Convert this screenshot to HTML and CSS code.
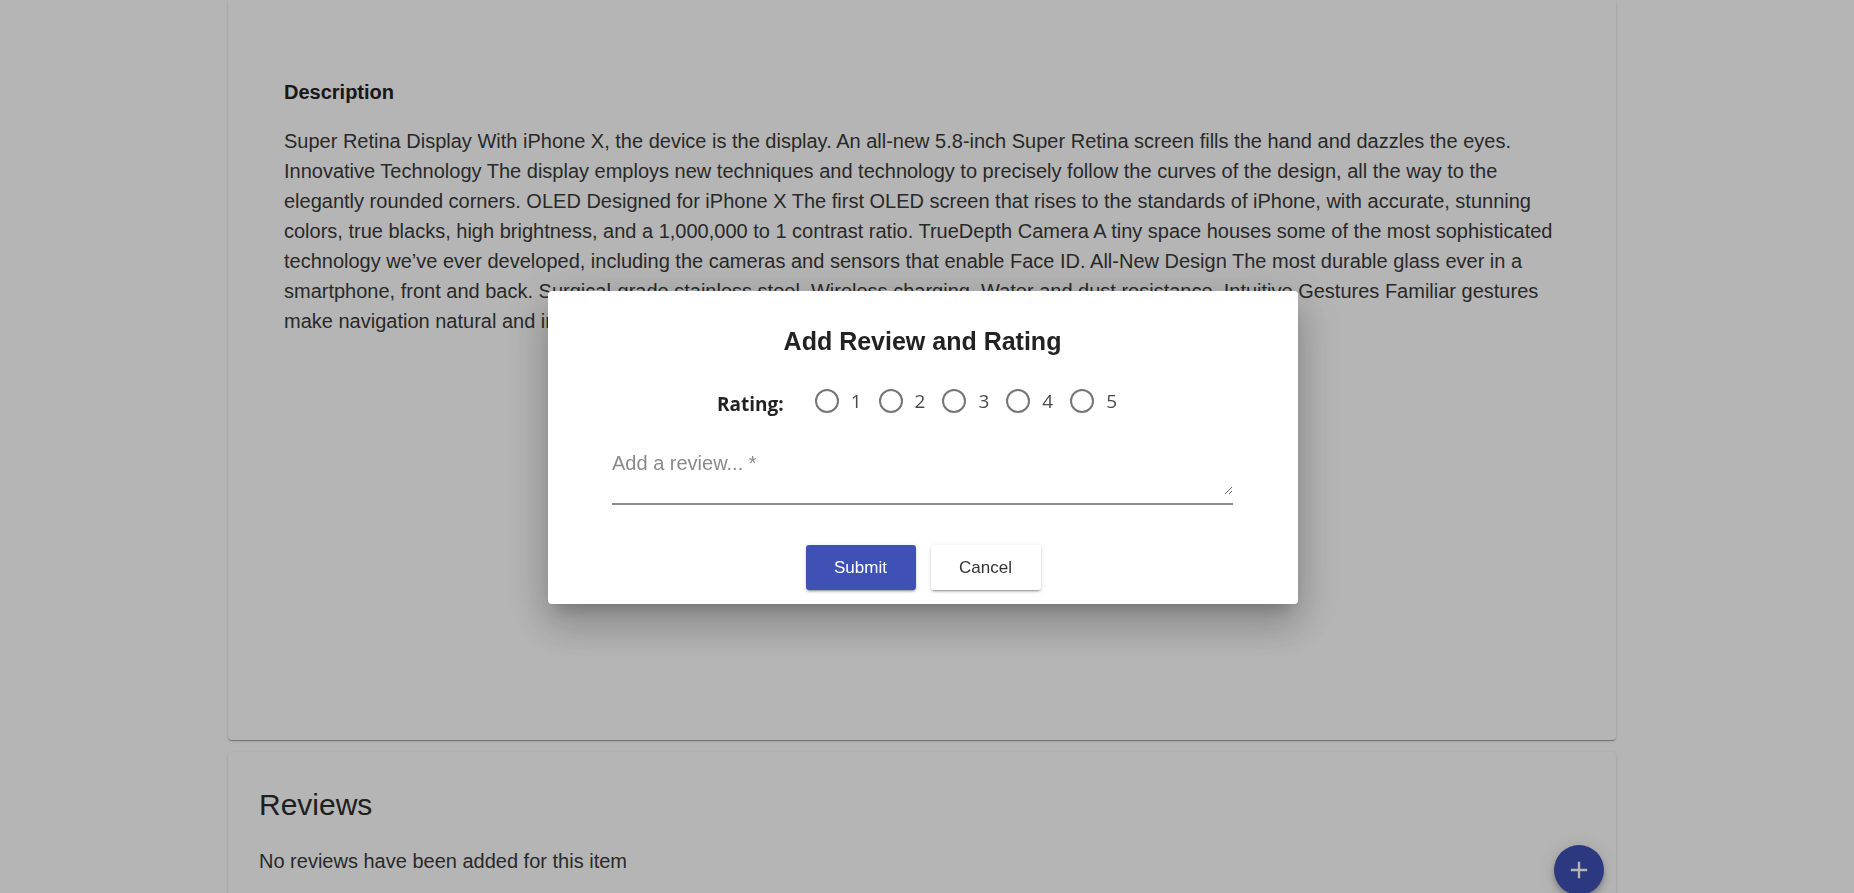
FILE: index.html
```html
<!DOCTYPE html>
<html lang="en">
<head>
<meta charset="utf-8">
<title>Product</title>
<link rel="stylesheet" href="styles.css">
</head>
<body>
<div class="page">
  <section class="card card-details">
    <h3 class="desc-title">Description</h3>
    <p class="desc-text">Super Retina Display With iPhone X, the device is the display. An all-new 5.8-inch Super Retina screen fills the hand and dazzles the eyes. Innovative Technology The display employs new techniques and technology to precisely follow the curves of the design, all the way to the elegantly rounded corners. OLED Designed for iPhone X The first OLED screen that rises to the standards of iPhone, with accurate, stunning colors, true blacks, high brightness, and a 1,000,000 to 1 contrast ratio. TrueDepth Camera A tiny space houses some of the most sophisticated technology we’ve ever developed, including the cameras and sensors that enable Face ID. All-New Design The most durable glass ever in a smartphone, front and back. Surgical-grade stainless steel. Wireless charging. Water and dust resistance. Intuitive Gestures Familiar gestures make navigation natural and intuitive. Instead of pressing a button, a single swipe takes you home.</p>
  </section>
  <section class="card card-reviews">
    <h2 class="reviews-title">Reviews</h2>
    <p class="reviews-empty">No reviews have been added for this item</p>
  </section>
</div>

<button class="fab" aria-label="Add review">
  <svg viewBox="0 0 24 24" width="28" height="28"><path d="M19 13h-6v6h-2v-6H5v-2h6V5h2v6h6v2z" fill="#fff"/></svg>
</button>

<div class="backdrop">
  <div class="dialog">
    <h2 class="dialog-title">Add Review and Rating</h2>
    <div class="rating-row">
      <span class="rating-label">Rating:</span>
      <div class="radio-group">
        <label class="radio"><span class="radio-circle"></span><span class="radio-num">1</span></label>
        <label class="radio"><span class="radio-circle"></span><span class="radio-num">2</span></label>
        <label class="radio"><span class="radio-circle"></span><span class="radio-num">3</span></label>
        <label class="radio"><span class="radio-circle"></span><span class="radio-num">4</span></label>
        <label class="radio"><span class="radio-circle"></span><span class="radio-num">5</span></label>
      </div>
    </div>
    <div class="field">
      <textarea class="review-input" placeholder="Add a review... *"></textarea>
    </div>
    <div class="actions">
      <button class="btn btn-primary">Submit</button>
      <button class="btn btn-plain">Cancel</button>
    </div>
  </div>
</div>
</body>
</html>
```
FILE: styles.css
```css
html, body {
  margin: 0;
  height: 893px;
  overflow: hidden;
}
body {
  background: #ffffff;
  font-family: "Liberation Sans", Arial, sans-serif;
  color: #383838;
}
.page {
  padding-left: 228px;
}
.card {
  box-sizing: border-box;
  width: 1388px;
  background: #ffffff;
  border-radius: 0 0 4px 4px;
  box-shadow: 0 2px 1px -1px rgba(0,0,0,0.2), 0 1px 1px 0 rgba(0,0,0,0.14), 0 1px 3px 0 rgba(0,0,0,0.12);
}
.card-details {
  height: 740px;
  padding: 81px 55px 0 56px;
}
.desc-title {
  margin: 0;
  font-size: 20px;
  line-height: 22px;
  font-weight: 700;
  color: #222222;
}
.desc-text {
  margin: 23px 0 0;
  font-size: 20px;
  line-height: 30px;
  color: #3a3a3a;
}
.card-reviews {
  margin-top: 12px;
  height: 300px;
  padding: 35px 31px 0;
  border-radius: 4px;
}
.reviews-title {
  margin: 0;
  font-size: 30px;
  line-height: 36px;
  font-weight: 400;
  color: #2c2c2c;
}
.reviews-empty {
  margin: 26px 0 0;
  font-size: 20px;
  line-height: 24px;
  color: #3a3a3a;
}
.fab {
  position: fixed;
  right: 250px;
  bottom: -2px;
  width: 50px;
  height: 50px;
  border: 0;
  border-radius: 50%;
  background: #3f51b5;
  display: flex;
  align-items: center;
  justify-content: center;
  padding: 0;
  box-shadow: 0 3px 5px -1px rgba(0,0,0,0.2), 0 6px 10px 0 rgba(0,0,0,0.14), 0 1px 18px 0 rgba(0,0,0,0.12);
}
.backdrop {
  position: fixed;
  inset: 0;
  background: rgba(0,0,0,0.29);
  display: flex;
  align-items: center;
  justify-content: center;
  padding: 2px 8px 0 0;
}
.dialog {
  box-sizing: border-box;
  width: 750px;
  height: 313px;
  background: #ffffff;
  border-radius: 4px;
  padding: 35px 65px 0 64px;
  box-shadow: 0 11px 15px -7px rgba(0,0,0,0.2), 0 24px 38px 3px rgba(0,0,0,0.14), 0 9px 46px 8px rgba(0,0,0,0.12);
}
.dialog-title {
  margin: 0;
  text-align: center;
  font-size: 25px;
  line-height: 30px;
  font-weight: 700;
  color: #222222;
}
.rating-row {
  margin-top: 24px;
  height: 42px;
  display: flex;
  align-items: center;
  padding-left: 105px;
}
.rating-label {
  font-family: "Open Sans", "Noto Sans", sans-serif;
  font-weight: 700;
  font-size: 19px;
  color: #222222;
  padding-top: 6px;
  margin-right: 31px;
}
.radio-group {
  display: flex;
  align-items: center;
}
.radio {
  display: flex;
  align-items: center;
  margin-right: 17px;
}
.radio-circle {
  box-sizing: border-box;
  width: 24px;
  height: 24px;
  border: 2.5px solid #757575;
  border-radius: 50%;
  margin-right: 12px;
}
.radio-num {
  font-family: "Open Sans", "Noto Sans", sans-serif;
  font-size: 19px;
  color: #4a4a4a;
}
.field {
  margin-top: 29px;
  padding-bottom: 8px;
  border-bottom: 2px solid #8d8d8d;
}
.review-input {
  display: block;
  box-sizing: border-box;
  width: 100%;
  height: 44px;
  margin: 0;
  padding: 0;
  border: 0;
  outline: none;
  resize: vertical;
  font-family: "Liberation Sans", Arial, sans-serif;
  font-size: 20px;
  line-height: 24px;
  color: #222222;
  background: transparent;
}
.review-input::placeholder {
  color: #8a8a8a;
}
.actions {
  margin-top: 40px;
  display: flex;
  justify-content: center;
  gap: 15px;
  padding-left: 1px;
}
.btn {
  width: 110px;
  height: 45px;
  border: 0;
  border-radius: 3px;
  font-family: "Liberation Sans", Arial, sans-serif;
  font-size: 17px;
  cursor: pointer;
  box-shadow: 0 3px 1px -2px rgba(0,0,0,0.2), 0 2px 2px 0 rgba(0,0,0,0.14), 0 1px 5px 0 rgba(0,0,0,0.12);
}
.btn-primary {
  background: #3f51b5;
  color: #ffffff;
}
.btn-plain {
  background: #ffffff;
  color: #333333;
}
```
